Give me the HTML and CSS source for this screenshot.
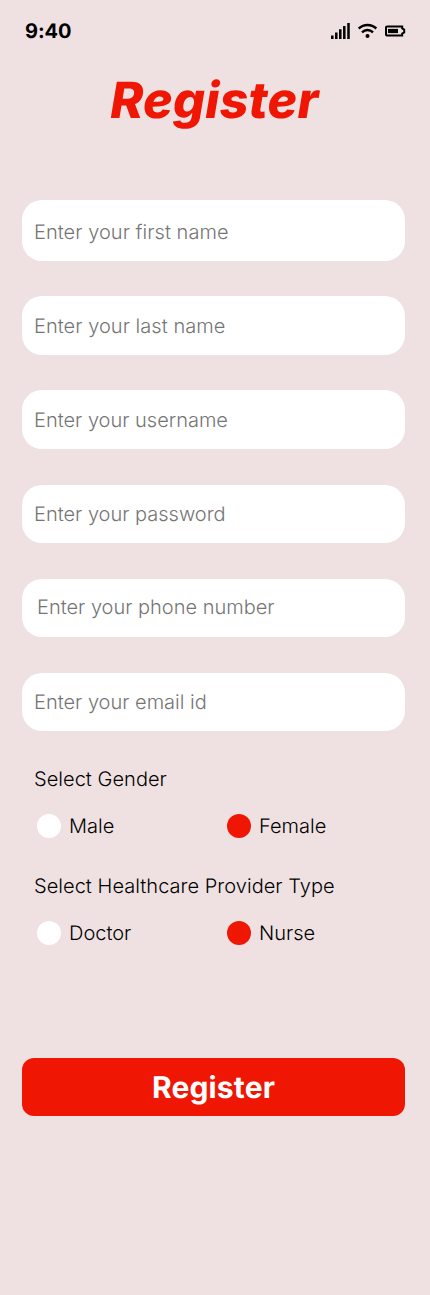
FILE: index.html
```html
<!DOCTYPE html>
<html lang="en">
<head>
<meta charset="utf-8">
<title>Register</title>
<link rel="stylesheet" href="styles.css">
</head>
<body>
<main class="screen">
  <header class="status">
    <span class="time">9:40</span>
    <div class="indicators">
      <svg class="signal" width="19" height="16" viewBox="0 0 19 16"><path d="M1.300 12.500v3.500M5.300 9.500v6.500M9.300 6.300v9.700M13.300 3v13M17.500 0v16" stroke="#000" stroke-width="2.500"/></svg>
      <svg class="wifi" width="20" height="16" viewBox="0 0 20 16" fill="none" stroke="#000" stroke-width="2.500"><path d="M.7 5.500C5.700.7 13.300.7 18.300 5.500M4 9.300c3.200-3 7.800-3 11 0"/><circle cx="9.500" cy="13" r="2" fill="#000" stroke="none"/></svg>
      <svg class="battery" width="21" height="12" viewBox="0 0 21 12"><path d="M2 1.500h15.200v2l2 1v3l-2 1v2H2a1 1 0 0 1-1-1v-7a1 1 0 0 1 1-1z" fill="none" stroke="#000" stroke-width="2"/><path d="M3 3.900h10v4.200H3z"/></svg>
    </div>
  </header>
  <h1 class="title">Register</h1>
  <form class="form">
    <input class="field field-first" placeholder="Enter your first name">
    <input class="field field-tall" placeholder="Enter your last name">
    <input class="field field-tall field-user" placeholder="Enter your username">
    <input class="field" placeholder="Enter your password">
    <input class="field field-phone" placeholder="Enter your phone number">
    <input class="field" placeholder="Enter your email id">
    <div class="group">
      <p class="legend">Select Gender</p>
      <div class="options">
        <label class="option"><span class="dot"></span>Male</label>
        <label class="option"><span class="dot dot-on"></span>Female</label>
      </div>
    </div>
    <div class="group">
      <p class="legend">Select Healthcare Provider Type</p>
      <div class="options">
        <label class="option"><span class="dot"></span>Doctor</label>
        <label class="option"><span class="dot dot-on"></span>Nurse</label>
      </div>
    </div>
    <button class="submit" type="button">Register</button>
  </form>
</main>
</body>
</html>
```
FILE: styles.css
```css
* { box-sizing: border-box; }
body { margin: 0; background: #efe1e1; font-family: Inter, sans-serif; text-rendering: geometricPrecision; }
.screen { width: 430px; height: 1295px; overflow: hidden; }
.status { display: flex; justify-content: space-between; align-items: center; height: 62px; padding: 0 25px; }
.time { font-size: 20px; font-weight: 700; letter-spacing: -0.1px; }
.indicators { display: flex; align-items: center; gap: 8px; }
.battery { margin: 0 -1px 0 -1px; }
.title { margin: 9px 0 0; padding-right: 1px; height: 61px; line-height: 61px; text-align: center; font-size: 50px; font-weight: 800; font-style: italic; letter-spacing: 0.25px; color: #f01604; }
.form { display: flex; flex-direction: column; padding: 68px 25px 0 22px; }
.field { width: 383px; height: 58px; margin: 0 0 36px; padding: 0 12px; border: 0; border-radius: 20px; background: #fff; font: 300 20px Inter, sans-serif; text-rendering: geometricPrecision; }
.field::placeholder { color: #757575; opacity: 1; }
.field-first { height: 61px; margin-bottom: 35px; padding-top: 3px; letter-spacing: 0.05px; }
.field-tall { height: 59px; margin-bottom: 35px; padding-top: 1px; letter-spacing: 0.05px; }
.field-user { margin-bottom: 36px; letter-spacing: 0; }
.field-phone { padding: 0 15px 2px; }
.group { height: 107px; padding-left: 12px; font-size: 20px; font-weight: 300; }
.legend { margin: 0 0 23px; line-height: 24px; letter-spacing: 0.04px; }
.options { display: grid; grid-template-columns: 190px 1fr; padding-left: 3px; }
.option { display: flex; align-items: center; gap: 8px; line-height: 24px; }
.dot { width: 24px; height: 24px; border-radius: 50%; background: #fff; }
.dot-on { background: #f01604; }
.submit { height: 58px; margin-top: 77px; padding: 2px 0 0; border: 0; border-radius: 12px; background: #f01604; color: #fff; font: 700 30px Inter, sans-serif; letter-spacing: 0.15px; text-rendering: geometricPrecision; }
```
